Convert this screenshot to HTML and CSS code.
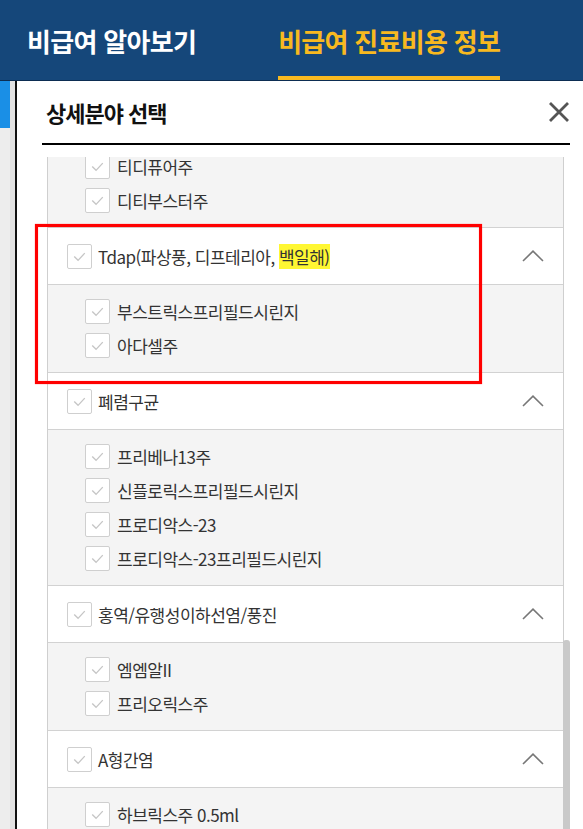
FILE: index.html
```html
<!DOCTYPE html>
<html lang="ko">
<head>
<meta charset="utf-8">
<title>상세분야 선택</title>
<link rel="stylesheet" href="styles.css">
</head>
<body>
<header class="nav">
  <a class="tab">비급여 알아보기</a>
  <a class="tab active">비급여 진료비용 정보</a>
</header>
<div class="wrap">
  <aside class="side">
    <div class="side-a"><div class="side-on"></div></div>
    <div class="side-b"></div>
  </aside>
  <section class="panel">
    <div class="head">
      <h2 class="title">상세분야 선택</h2>
      <button class="close" aria-label="닫기">
        <svg width="22" height="22" viewBox="0 0 22 22"><path d="M2 2L20 20M20 2L2 20" stroke="#555" stroke-width="2.8" fill="none"/></svg>
      </button>
    </div>
    <div class="listbox">
      <div class="list">
        <ul class="sub">
          <li class="row"><span class="cb"><svg viewBox="0 0 24 24"><path d="M6.5 12l4 4 7-7.5" /></svg></span>티디퓨어주</li>
          <li class="row"><span class="cb"><svg viewBox="0 0 24 24"><path d="M6.5 12l4 4 7-7.5" /></svg></span>디티부스터주</li>
        </ul>
        <div class="group">
          <div class="ghead"><span class="cb"><svg viewBox="0 0 24 24"><path d="M6.5 12l4 4 7-7.5" /></svg></span><span class="gname">Tdap(파상풍, 디프테리아, <mark class="hl">백일해)</mark></span><svg class="chev" width="22" height="12" viewBox="0 0 22 12"><path d="M1 11L11 1.2L21 11"/></svg></div>
          <ul class="sub">
            <li class="row"><span class="cb"><svg viewBox="0 0 24 24"><path d="M6.5 12l4 4 7-7.5" /></svg></span>부스트릭스프리필드시린지</li>
            <li class="row"><span class="cb"><svg viewBox="0 0 24 24"><path d="M6.5 12l4 4 7-7.5" /></svg></span>아다셀주</li>
          </ul>
        </div>
        <div class="group">
          <div class="ghead"><span class="cb"><svg viewBox="0 0 24 24"><path d="M6.5 12l4 4 7-7.5" /></svg></span><span class="gname">폐렴구균</span><svg class="chev" width="22" height="12" viewBox="0 0 22 12"><path d="M1 11L11 1.2L21 11"/></svg></div>
          <ul class="sub">
            <li class="row"><span class="cb"><svg viewBox="0 0 24 24"><path d="M6.5 12l4 4 7-7.5" /></svg></span>프리베나13주</li>
            <li class="row"><span class="cb"><svg viewBox="0 0 24 24"><path d="M6.5 12l4 4 7-7.5" /></svg></span>신플로릭스프리필드시린지</li>
            <li class="row"><span class="cb"><svg viewBox="0 0 24 24"><path d="M6.5 12l4 4 7-7.5" /></svg></span>프로디악스-23</li>
            <li class="row"><span class="cb"><svg viewBox="0 0 24 24"><path d="M6.5 12l4 4 7-7.5" /></svg></span>프로디악스-23프리필드시린지</li>
          </ul>
        </div>
        <div class="group">
          <div class="ghead"><span class="cb"><svg viewBox="0 0 24 24"><path d="M6.5 12l4 4 7-7.5" /></svg></span><span class="gname">홍역/유행성이하선염/풍진</span><svg class="chev" width="22" height="12" viewBox="0 0 22 12"><path d="M1 11L11 1.2L21 11"/></svg></div>
          <ul class="sub">
            <li class="row"><span class="cb"><svg viewBox="0 0 24 24"><path d="M6.5 12l4 4 7-7.5" /></svg></span>엠엠알II</li>
            <li class="row"><span class="cb"><svg viewBox="0 0 24 24"><path d="M6.5 12l4 4 7-7.5" /></svg></span>프리오릭스주</li>
          </ul>
        </div>
        <div class="group">
          <div class="ghead"><span class="cb"><svg viewBox="0 0 24 24"><path d="M6.5 12l4 4 7-7.5" /></svg></span><span class="gname">A형간염</span><svg class="chev" width="22" height="12" viewBox="0 0 22 12"><path d="M1 11L11 1.2L21 11"/></svg></div>
          <ul class="sub">
            <li class="row"><span class="cb"><svg viewBox="0 0 24 24"><path d="M6.5 12l4 4 7-7.5" /></svg></span>하브릭스주 0.5ml</li>
            <li class="row"><span class="cb"><svg viewBox="0 0 24 24"><path d="M6.5 12l4 4 7-7.5" /></svg></span>하브릭스주 1ml</li>
          </ul>
        </div>
      </div>
      <div class="thumb"></div>
      <div class="mark-box"></div>
    </div>
  </section>
</div>
</body>
</html>
```

FILE: styles.css
```css
* { box-sizing: border-box; }
html, body { margin: 0; padding: 0; }
body {
  width: 583px;
  height: 829px;
  overflow: hidden;
  font-family: "Noto Sans CJK KR", "Noto Sans", sans-serif;
  color: #333;
  background: #fff;
  display: flex;
  flex-direction: column;
}

.nav {
  height: 81px;
  flex: none;
  background: #15477a;
  border-bottom: 1px solid #0c2d52;
  display: flex;
  align-items: stretch;
  padding-left: 27px;
  gap: 82px;
}
.tab {
  display: flex;
  align-items: center;
  padding-top: 4px;
  border-bottom: 4px solid transparent;
  font-size: 26px;
  font-weight: 700;
  letter-spacing: -0.7px;
  color: #fff;
  white-space: nowrap;
  text-decoration: none;
}
.tab.active {
  color: #f8b91f;
  border-bottom-color: #f8b91f;
}

.wrap {
  flex: 1;
  display: flex;
  min-height: 0;
}
.side {
  display: flex;
  flex: none;
}
.side-a {
  width: 10px;
  background: #ededed;
}
.side-on {
  height: 47px;
  background: #1a8fe6;
}
.side-b {
  width: 5px;
  background: #e2e2e2;
}

.panel {
  flex: 1;
  display: flex;
  flex-direction: column;
  border-left: 2px solid #111;
  background: #fff;
  min-height: 0;
}
.head {
  height: 64px;
  margin: 0 13px 0 25px;
  border-bottom: 2px solid #000;
  display: flex;
  align-items: center;
  justify-content: space-between;
  padding-left: 4px;
}
.title {
  margin: 0;
  font-size: 22px;
  font-weight: 700;
  letter-spacing: -1px;
  color: #111;
}
.close {
  border: 0;
  background: none;
  padding: 0;
  width: 22px;
  height: 22px;
  display: block;
}
.close svg { display: block; }

.listbox {
  position: relative;
  flex: 1;
  min-height: 0;
  margin: 12px 19px 0 30px;
}
.list {
  height: 100%;
  overflow: hidden;
  border-left: 1px solid #cfcfcf;
  border-right: 1px solid #cfcfcf;
}
.list > .sub:first-child {
  margin-top: -17px;
}
.sub {
  list-style: none;
  margin: 0;
  padding: 9px 0 10px 37px;
  background: #f4f4f4;
}
.group .sub {
  border-top: 1px solid #d2d2d2;
}
.row {
  height: 34px;
  display: flex;
  align-items: center;
  gap: 7px;
  font-size: 17px;
  letter-spacing: -0.5px;
  color: #333;
  white-space: nowrap;
}
.ghead {
  height: 57px;
  border-top: 1px solid #d2d2d2;
  background: #fff;
  display: flex;
  align-items: center;
  padding: 0 19px 0 19px;
  gap: 6px;
  font-size: 17px;
  letter-spacing: -0.5px;
  color: #333;
  white-space: nowrap;
}
.gname { flex: 1; }
.hl {
  background: #fff733;
  color: #333;
}
.chev {
  flex: none;
  fill: none;
  stroke: #777;
  stroke-width: 1.6;
}
.cb {
  flex: none;
  width: 25px;
  height: 25px;
  border: 1px solid #cfcfcf;
  border-radius: 2px;
  background: #fff;
  display: block;
}
.cb svg {
  display: block;
  width: 23px;
  height: 23px;
  fill: none;
  stroke: #c6c6c6;
  stroke-width: 1.4;
}

.thumb {
  position: absolute;
  right: -6px;
  top: 483px;
  bottom: 0;
  width: 7px;
  background: #c9c9c9;
  border-radius: 3px 3px 0 0;
}
.mark-box {
  position: absolute;
  left: -12px;
  top: 67px;
  width: 447px;
  height: 160px;
  border: 3px solid #ff0000;
  box-shadow: 0 0 1px #ff6060, inset 0 0 1px #ff6060;
  pointer-events: none;
}
```
